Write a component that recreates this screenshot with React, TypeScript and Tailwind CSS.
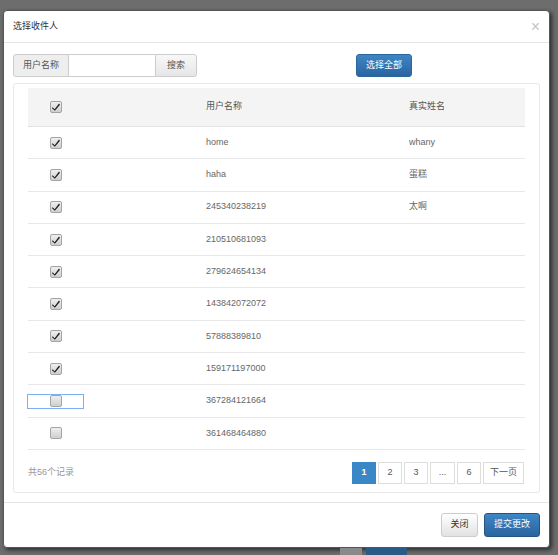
import React, { useState } from 'react'

type Person = { id: number; username: string; realName: string; checked: boolean }

const initialRows: Person[] = [
  { id: 1, username: 'home', realName: 'whany', checked: true },
  { id: 2, username: 'haha', realName: '蛋糕', checked: true },
  { id: 3, username: '245340238219', realName: '太啊', checked: true },
  { id: 4, username: '210510681093', realName: '', checked: true },
  { id: 5, username: '279624654134', realName: '', checked: true },
  { id: 6, username: '143842072072', realName: '', checked: true },
  { id: 7, username: '57888389810', realName: '', checked: true },
  { id: 8, username: '159171197000', realName: '', checked: true },
  { id: 9, username: '367284121664', realName: '', checked: false },
  { id: 10, username: '361468464880', realName: '', checked: false },
]

const font = { fontFamily: '"Liberation Sans", "Noto Sans CJK SC", sans-serif' }

function CheckBox({ checked, focused, onClick }: { checked: boolean; focused?: boolean; onClick?: () => void }) {
  return (
    <button
      onClick={onClick}
      className={`flex h-[13px] w-[55px] items-center justify-center ${focused ? 'outline outline-1 outline-[#7aaef5]' : ''}`}
    >
      <span className="flex h-[12px] w-[12px] items-center justify-center rounded-[2px] border border-[#a4a4a4] bg-gradient-to-b from-[#efefef] to-[#cfcfcf]">
        {checked && (
          <svg viewBox="0 0 12 12" className="h-[10px] w-[10px]">
            <path d="M1.8 6.4 L4.4 8.6 L9.6 1.8 L10.8 3.2 L4.7 10.6 L1.2 7.6 Z" fill="#1e1e1e" />
          </svg>
        )}
      </span>
    </button>
  )
}

export default function App() {
  const [rows, setRows] = useState<Person[]>(initialRows)
  const [headerChecked, setHeaderChecked] = useState(true)
  const [query, setQuery] = useState('')

  const toggle = (id: number) => {
    setRows(prev => prev.map(r => (r.id === id ? { ...r, checked: !r.checked } : r)))
  }

  const selectAll = () => {
    setRows(prev => prev.map(r => ({ ...r, checked: true })))
    setHeaderChecked(true)
  }

  return (
    <div className="flex h-[555px] w-[558px] flex-col overflow-hidden bg-[#6d6d6d] text-[9px] text-[#555]" style={font}>
      {/* modal */}
      <div className="ml-[3px] mt-[10px] flex h-[538px] w-[547px] shrink-0 flex-col rounded-[4px] border border-[#555] bg-white shadow-[2px_2px_4px_rgba(0,0,0,0.6)]">
        {/* header */}
        <div className="flex h-[32px] shrink-0 items-center justify-between border-b border-[#e5e5e5] pl-[9px] pr-[9px]">
          <span className="text-[9px] text-[#333]">选择收件人</span>
          <span className="text-[16px] leading-none text-[#c4c4c4]">×</span>
        </div>

        {/* body */}
        <div className="flex flex-1 flex-col pl-[9px] pt-[11px]">
          <div className="flex h-[23px] items-center">
            <div className="flex h-[23px]">
              <span className="flex w-[56px] items-center justify-center rounded-l-[3px] border border-[#ccc] bg-[#eee] text-[#555]">用户名称</span>
              <input
                value={query}
                onChange={e => setQuery(e.target.value)}
                className="h-[23px] w-[86px] border-y border-[#ccc] bg-white px-[4px] outline-none"
              />
              <button className="w-[42px] rounded-r-[3px] border border-[#ccc] bg-gradient-to-b from-[#f8f8f8] to-[#e6e6e6] text-[#555]">搜索</button>
            </div>
            <button
              onClick={selectAll}
              className="ml-[159px] h-[23px] w-[56px] rounded-[3px] border border-[#2b669a] bg-gradient-to-b from-[#3f86c4] to-[#2a64a0] text-white"
            >
              选择全部
            </button>
          </div>

          {/* panel */}
          <div className="mt-[6px] flex h-[410px] w-[527px] flex-col rounded-[3px] border border-[#e8e8e8] px-[14px] pt-[4px]">
            <div className="flex flex-col">
              <div className="grid h-[39px] grid-cols-[178px_203px_1fr] items-center border-b border-[#e2e2e2] bg-[#f4f4f4] text-[#555]">
                <div>
                  <CheckBox checked={headerChecked} onClick={() => setHeaderChecked(v => !v)} />
                </div>
                <div>用户名称</div>
                <div>真实姓名</div>
              </div>
              {rows.map(r => (
                <div key={r.id} className="grid h-[32.3px] grid-cols-[178px_203px_1fr] items-center border-b border-[#e8e8e8] text-[#666]">
                  <div>
                    <CheckBox checked={r.checked} focused={r.id === 9} onClick={() => toggle(r.id)} />
                  </div>
                  <div>{r.username}</div>
                  <div>{r.realName}</div>
                </div>
              ))}
            </div>

            <div className="mt-[12px] flex items-center justify-between">
              <span className="text-[#999]">共56个记录</span>
              <div className="flex gap-[2px] pr-[1px]">
                <button className="flex h-[22px] w-[24px] items-center justify-center border border-[#3a87c8] bg-[#3a87c8] font-bold text-white">1</button>
                <button className="flex h-[22px] w-[24px] items-center justify-center border border-[#ddd] bg-white">2</button>
                <button className="flex h-[22px] w-[24px] items-center justify-center border border-[#ddd] bg-white">3</button>
                <button className="flex h-[22px] w-[25px] items-center justify-center border border-[#ddd] bg-white">...</button>
                <button className="flex h-[22px] w-[24px] items-center justify-center border border-[#ddd] bg-white">6</button>
                <button className="flex h-[22px] w-[41px] items-center justify-center border border-[#ddd] bg-white">下一页</button>
              </div>
            </div>
          </div>
        </div>

        {/* footer */}
        <div className="flex h-[45px] shrink-0 items-start justify-end gap-[6px] border-t border-[#e5e5e5] pr-[9px] pt-[10px]">
          <button className="h-[24px] w-[37px] rounded-[3px] border border-[#ccc] bg-gradient-to-b from-white to-[#e2e2e2] text-[#333]">关闭</button>
          <button className="h-[24px] w-[56px] rounded-[3px] border border-[#245580] bg-gradient-to-b from-[#3f86c4] to-[#2a64a0] text-white">提交更改</button>
        </div>
      </div>

      {/* page behind the overlay */}
      <div className="flex h-[7px] items-stretch">
        <div className="ml-[340px] w-[22px] bg-[#8a8a8a]" />
        <div className="ml-[4px] w-[41px] bg-[#2c5a86]" />
      </div>
    </div>
  )
}
